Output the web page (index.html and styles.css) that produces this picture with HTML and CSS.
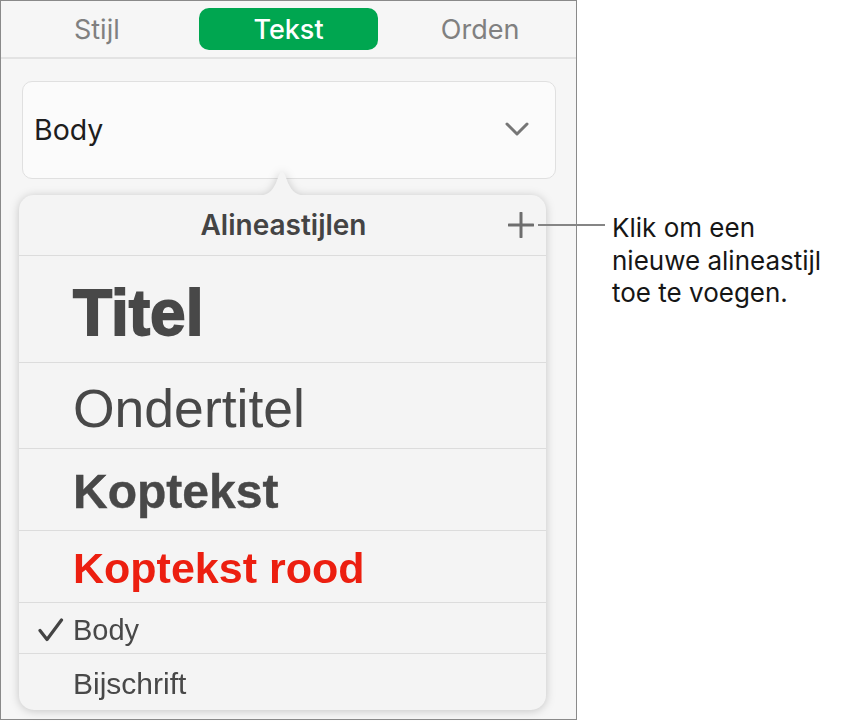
FILE: index.html
```html
<!DOCTYPE html>
<html lang="nl">
<head>
<meta charset="utf-8">
<title>Alineastijlen</title>
<link rel="stylesheet" href="styles.css">
</head>
<body>
<div class="page">
  <div class="panel">
    <div class="tabs">
      <div class="tab">Stijl</div>
      <div class="tab"><span class="pill">Tekst</span></div>
      <div class="tab">Orden</div>
    </div>
    <div class="select">
      <span class="select-label">Body</span>
      <svg class="chevron" width="24" height="14" viewBox="0 0 24 14"><path d="M2 2 L12 12 L22 2" fill="none" stroke="#767676" stroke-width="3" stroke-linecap="round" stroke-linejoin="round"/></svg>
    </div>
    <div class="popover">
      <svg class="tail" width="52" height="27" viewBox="0 0 52 27"><path d="M0 27 C12 27 16 22 20 14 L23 6 Q26 0 29 6 L32 14 C36 22 40 27 52 27 Z" fill="#f4f4f4"/></svg>
      <div class="pop-head">
        <span></span>
        <span class="pop-title">Alineastijlen</span>
        <svg class="plus" width="26" height="26" viewBox="0 0 26 26"><path d="M13 1 V25 M1 13 H25" fill="none" stroke="#6e6e6e" stroke-width="3" stroke-linecap="round"/></svg>
      </div>
      <ul class="styles">
        <li class="row r-titel">Titel</li>
        <li class="row r-onder">Ondertitel</li>
        <li class="row r-kop">Koptekst</li>
        <li class="row r-rood">Koptekst rood</li>
        <li class="row r-body"><svg class="check" width="26" height="24" viewBox="0 0 26 24"><path d="M2 12.5 L9 21.5 L23.5 2" fill="none" stroke="#444" stroke-width="3.2" stroke-linecap="round" stroke-linejoin="round"/></svg>Body</li>
        <li class="row r-bij">Bijschrift</li>
      </ul>
    </div>
  </div>
  <div class="note">Klik om een<br>nieuwe alineastijl<br>toe te voegen.</div>
</div>
</body>
</html>
```
FILE: styles.css
```css
* { box-sizing: border-box; }
html, body { margin: 0; padding: 0; background: #fff; }
body { font-family: Inter, "Noto Sans", sans-serif; }

.page {
  display: flex;
  align-items: flex-start;
  width: 841px;
  height: 721px;
}

.panel {
  width: 577px;
  height: 720px;
  border: 1px solid #8a8a8a;
  background: #f6f6f6;
  display: flex;
  flex-direction: column;
  flex-shrink: 0;
}

.tabs {
  display: grid;
  grid-template-columns: 1fr 1fr 1fr;
  height: 58px;
  border-bottom: 2px solid #e3e3e3;
  padding-top: 7px;
}
.tab {
  display: flex;
  justify-content: center;
  align-items: center;
  height: 42px;
  font-size: 27px;
  font-weight: 400;
  color: #808080;
}
.pill {
  display: flex;
  align-items: center;
  justify-content: center;
  width: 179px;
  height: 42px;
  border-radius: 10px;
  background: #00a650;
  color: #fff;
  font-weight: 500;
}

.select {
  margin: 22px 0 0 21px;
  width: 534px;
  height: 98px;
  border: 1px solid #e0e0e0;
  border-radius: 10px;
  background: #fbfbfb;
  display: flex;
  align-items: center;
  justify-content: space-between;
  padding: 0 26px 2px 11px;
}
.select-label {
  font-size: 28.5px;
  font-weight: 400;
  color: #1e1e1e;
}
.chevron { display: block; }

.popover {
  position: relative;
  margin: 16px 0 0 18px;
  width: 527px;
  height: 515px;
  border-radius: 15px;
  background: #f4f4f4;
  filter: drop-shadow(0 1px 5px rgba(0, 0, 0, 0.2));
  display: flex;
  flex-direction: column;
}
.tail {
  position: absolute;
  left: 237px;
  top: -26px;
  display: block;
}

.pop-head {
  height: 61px;
  border-bottom: 1px solid #dcdcdc;
  display: grid;
  grid-template-columns: 1fr auto 1fr;
  align-items: center;
}
.pop-title {
  font-size: 28px;
  font-weight: 600;
  color: #444;
  padding-left: 2px;
}
.plus {
  justify-self: end;
  margin-right: 12px;
  display: block;
}

.styles {
  list-style: none;
  margin: 0;
  padding: 0;
  font-family: "Liberation Sans", Arial, sans-serif;
  color: #484848;
}
.row {
  display: flex;
  align-items: center;
  padding-left: 54px;
  border-bottom: 1px solid #dcdcdc;
  white-space: nowrap;
}
.row:last-child { border-bottom: none; }

.r-titel {
  height: 107px;
  padding-top: 8px;
  font-size: 64px;
  font-weight: 700;
  -webkit-text-stroke: 1.8px #484848;
}
.r-onder {
  height: 86px;
  padding-top: 6px;
  font-size: 53.5px;
}
.r-kop {
  height: 82px;
  padding-top: 3px;
  font-size: 48px;
  font-weight: 700;
  -webkit-text-stroke: 0.4px #484848;
}
.r-rood {
  height: 72px;
  padding-top: 4px;
  font-size: 43px;
  font-weight: 700;
  color: #ec1f10;
}
.r-body {
  height: 51px;
  padding-top: 4px;
  padding-left: 19px;
  font-size: 29px;
}
.check {
  display: block;
  margin-right: 9px;
}
.r-bij {
  height: 56px;
  padding-top: 4px;
  font-size: 30px;
}

.note {
  position: relative;
  margin: 212px 0 0 35px;
  font-size: 26px;
  line-height: 32.5px;
  color: #161616;
}
.note::before {
  content: "";
  position: absolute;
  left: -74px;
  top: 12px;
  width: 67px;
  height: 2px;
  background: #858585;
}
```
